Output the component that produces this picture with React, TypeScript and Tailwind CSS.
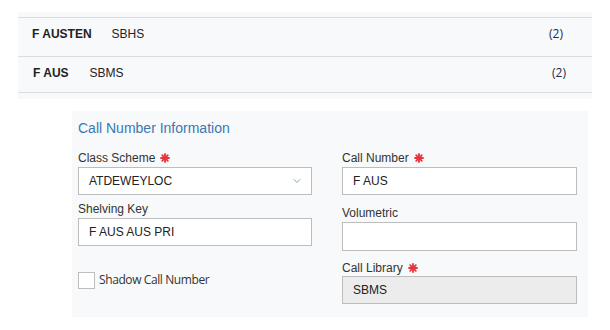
import { ChevronDown } from "lucide-react";

const Req = () => (
  <svg className="ml-[5px] inline-block" width="10" height="10" viewBox="0 0 10 10">
    <g stroke="#e8343c" strokeWidth="1.8" strokeLinecap="round">
      <line x1="5" y1="1" x2="5" y2="9" />
      <line x1="1" y1="5" x2="9" y2="5" />
      <line x1="2.2" y1="2.2" x2="7.8" y2="7.8" />
      <line x1="7.8" y1="2.2" x2="2.2" y2="7.8" />
    </g>
  </svg>
);

const Label = ({ text, req }: { text: string; req?: boolean }) => (
  <div className="flex items-center h-[16px] text-[12px] text-[#333]">
    {text}
    {req && <Req />}
  </div>
);

const Field = ({ value, muted, tall }: { value?: string; muted?: boolean; tall?: boolean }) => (
  <div
    className={`flex items-center ${tall ? "h-[29px]" : "h-[28px]"} border border-[#bdbdbd] px-[10px] text-[12px] text-[#222] ${
      muted ? "bg-[#ececec]" : "bg-white"
    }`}
  >
    {value}
  </div>
);

const rows = [
  { num: "F AUSTEN", lib: "SBHS", count: "(2)", h: "h-[40px] pb-[6px]", gap: "ml-[20px]", cx: "mr-[29px]" },
  { num: "F AUS", lib: "SBMS", count: "(2)", h: "h-[36px] pb-[3px]", gap: "ml-[21px]", cx: "mr-[26px]" },
];

export default function App() {
  return (
    <div className="w-[610px] h-[330px] bg-white overflow-hidden" style={{ fontFamily: '"Liberation Sans", Arial, sans-serif' }}>
      <div className="ml-[18px] mt-[12px] w-[574px] bg-[#f8f9fa] pt-[5px] pb-[6px]">
        {rows.map((r, i) => (
          <div
            key={r.num}
            className={`flex items-center ${r.h} border-b border-[#dcdcdc] ${i === 0 ? "border-t" : ""} pl-[14px] text-[12px]`}
          >
            <span className={`font-bold text-[#222] ${i === 1 ? "pl-[1px]" : ""}`}>{r.num}</span>
            <span className={`${r.gap} text-[#222]`}>{r.lib}</span>
            <span
              className={`ml-auto ${r.cx} text-[12px] text-[#1f2a48]`}
              style={{ fontFamily: '"Open Sans", "Noto Sans", sans-serif' }}
            >
              {r.count}
            </span>
          </div>
        ))}
      </div>

      <div className="ml-[72px] mt-[12px] w-[516px] h-[206px] bg-[#f8f9fa] pl-[6px] pr-[11px] pt-[7px]">
        <div className="h-[20px] flex items-center text-[14px] text-[#3a78b2]">Call Number Information</div>
        <div className="grid grid-cols-[234px_235px] gap-x-[30px] mt-[12px]">
          <div className="flex flex-col">
            <Label text="Class Scheme" req />
            <div className="mt-[1px] flex items-center h-[28px] border border-[#bdbdbd] bg-white pl-[10px] pr-[8px] text-[12px] text-[#222]">
              ATDEWEYLOC
              <ChevronDown className="ml-auto" size={12} color="#7aa7c7" strokeWidth={2} />
            </div>
            <div className="mt-[6px]">
              <Label text="Shelving Key" />
            </div>
            <div className="mt-[1px]">
              <Field value="F AUS AUS PRI" />
            </div>
            <div className="mt-[25px] flex items-center">
              <div className="w-[17px] h-[17px] border border-[#bdbdbd] bg-white" />
              <span
                className="ml-[4px] text-[12px] tracking-[-0.4px] text-[#333]"
                style={{ fontFamily: '"Open Sans", "Noto Sans", sans-serif' }}
              >
                Shadow Call Number
              </span>
            </div>
          </div>
          <div className="flex flex-col">
            <Label text="Call Number" req />
            <div className="mt-[1px]">
              <Field value="F AUS" />
            </div>
            <div className="mt-[10px]">
              <Label text="Volumetric" />
            </div>
            <div className="mt-[1px]">
              <Field tall />
            </div>
            <div className="mt-[9px]">
              <Label text="Call Library" req />
            </div>
            <Field value="SBMS" muted />
          </div>
        </div>
      </div>
    </div>
  );
}
